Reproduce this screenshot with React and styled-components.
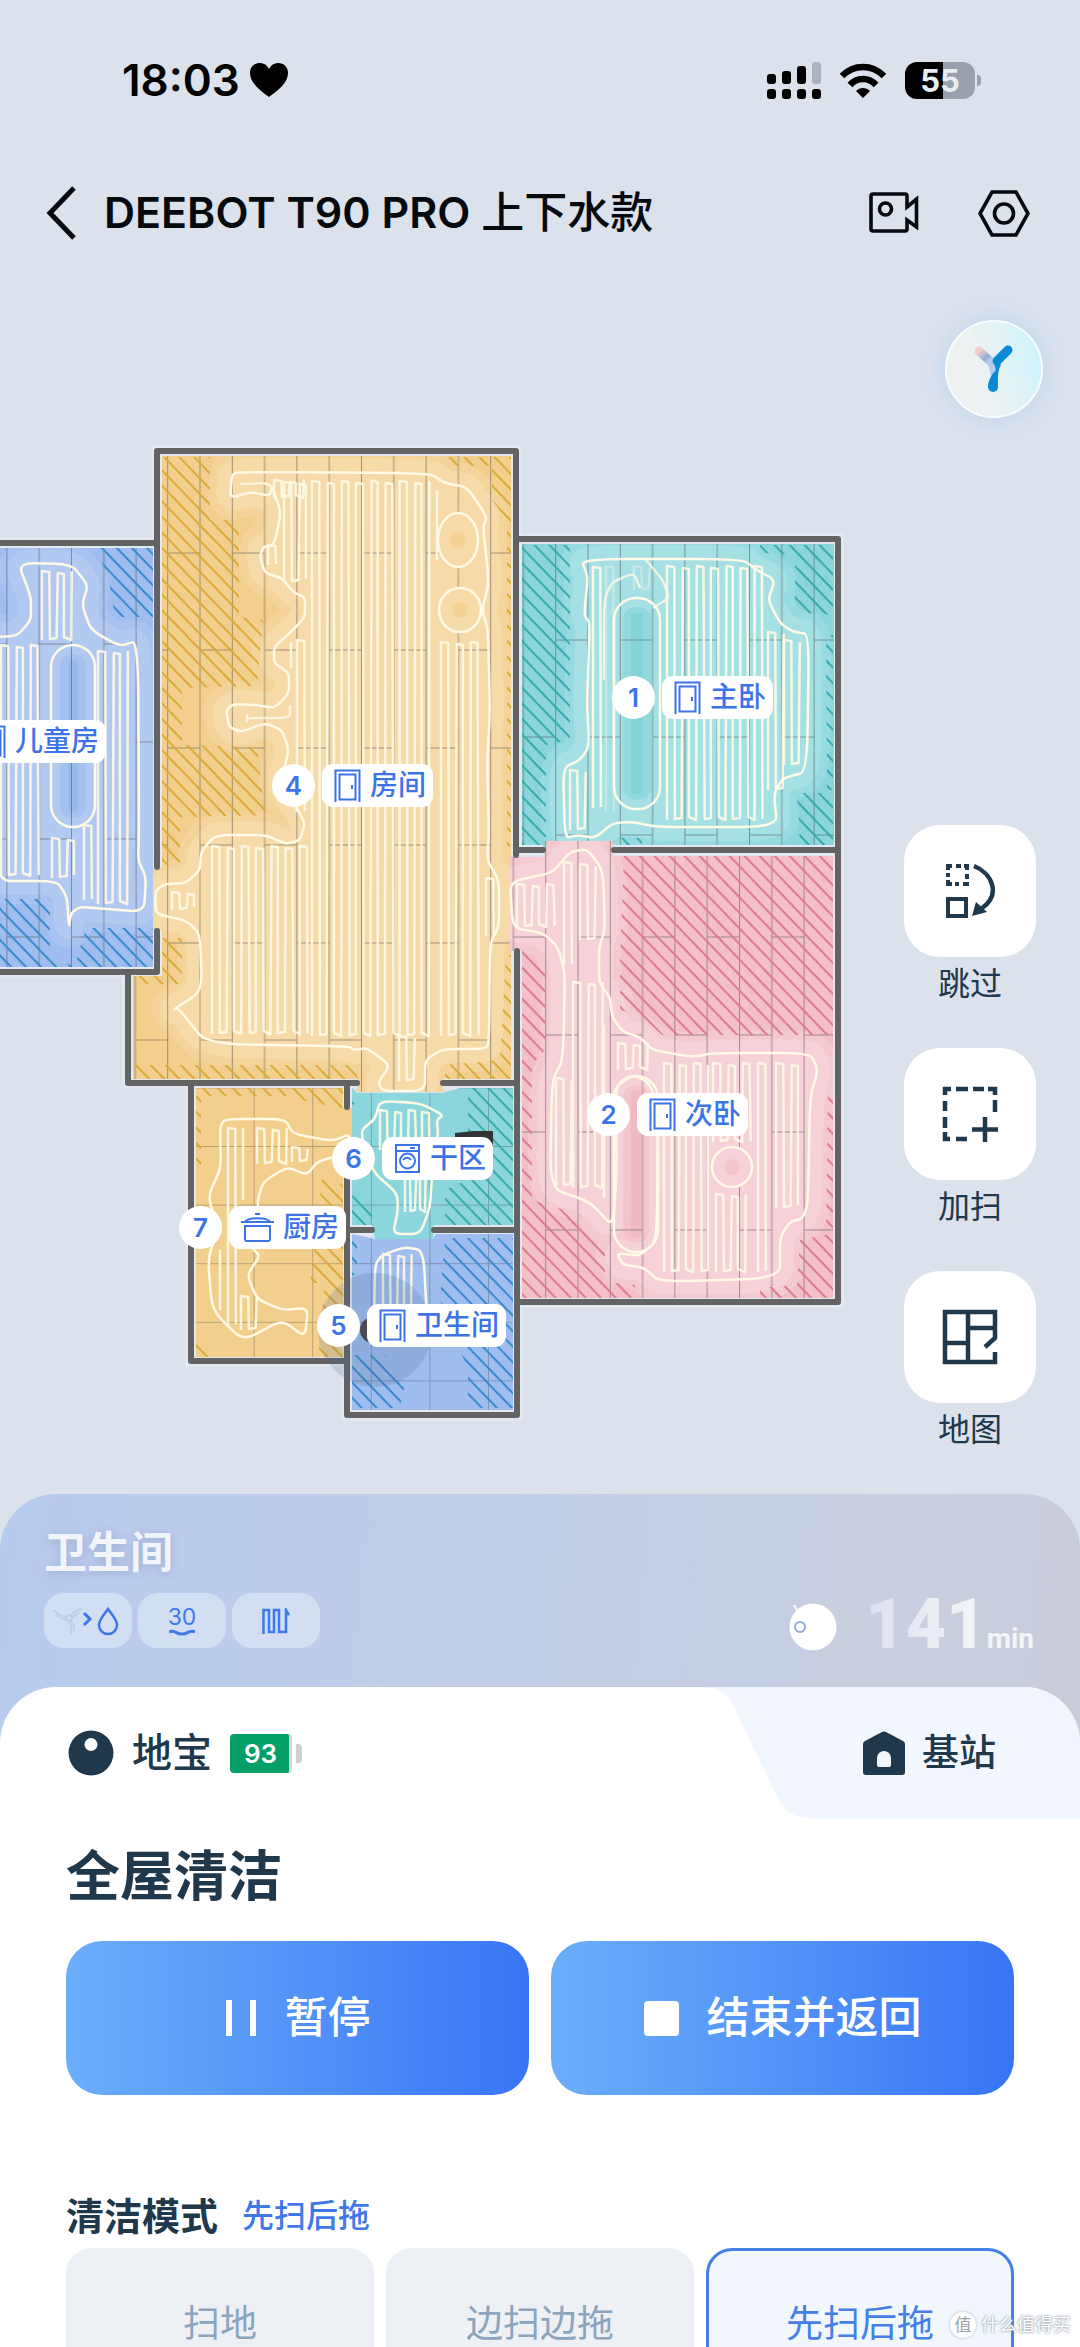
import React, { useState } from "react";
import styled, { createGlobalStyle } from "styled-components";

const GlobalStyle = createGlobalStyle`
    * { box-sizing: border-box; }
    body {
        margin: 0;
        background: #dbe2ec;
        font-family: Inter, "Noto Sans CJK SC", sans-serif;
        line-height: 1.2;
        color: #20384b;
    }
    button { font-family: inherit; line-height: inherit; color: inherit; border: 0; padding: 0; background: none; }
    h1, h2, h3, p { margin: 0; }
    svg { display: block; flex: none; }
`

const Page = styled.div`
    position: relative;
    height: 100vh;
    overflow: hidden;
    background: #dbe2ec;
    display: flex;
    flex-direction: column;
`

const StatusBar = styled.div`
    flex: none;
    height: 160px;
    padding: 0 105px 0 122px;
    display: flex;
    align-items: center;
    justify-content: space-between;
    color: #000;
`
const Clock = styled.div`
    display: flex;
    align-items: center;
    gap: 10px;
    font-size: 44px;
    font-weight: 600;
`
const StatusIcons = styled.div`
    display: flex;
    align-items: center;
    gap: 18px;
`
const PhoneBattery = styled.div`
    position: relative;
    width: 70px;
    height: 37px;
    border-radius: 12px;
    background: linear-gradient(90deg, #000 55%, #98a1ad 55%);
    color: #e9edf3;
    font-size: 31px;
    line-height: 37px;
    font-weight: 700;
    text-align: center;
    &::after {
        content: "";
        position: absolute;
        right: -6px;
        top: 13px;
        width: 4px;
        height: 11px;
        border-radius: 0 4px 4px 0;
        background: #98a1ad;
    }
`

const Header = styled.header`
    flex: none;
    height: 106px;
    padding: 0 50px 0 44px;
    display: flex;
    align-items: center;
    color: #06090d;
`
const Title = styled.h1`
    flex: 1;
    margin-left: 26px;
    font-size: 43px;
    font-weight: 600;
    white-space: nowrap;
`
const Edition = styled.span`
    font-weight: 500;
`
const IconButton = styled.button`
    margin-left: ${(props) => props.$gap || 0}px;
`

const MapArea = styled.main`
    position: relative;
    flex: none;
    height: 1228px;
    overflow: hidden;
`
const Pin = styled.div`
    position: absolute;
    left: ${(props) => props.$x}px;
    top: ${(props) => props.$y}px;
    display: flex;
    gap: 7px;
    color: #3c74e8;
    font-weight: 600;
`
const PinNumber = styled.span`
    width: 43px;
    height: 43px;
    border-radius: 50%;
    background: #fff;
    font-size: 26px;
    line-height: 43px;
    text-align: center;
`
const PinLabel = styled.span`
    display: flex;
    align-items: center;
    gap: 9px;
    height: 43px;
    padding: 0 7px 0 12px;
    border-radius: 11px;
    background: #fff;
    font-size: 28px;
    line-height: 43px;
    font-weight: 500;
    white-space: nowrap;
`
const Assistant = styled.button`
    position: absolute;
    right: 37px;
    top: 54px;
    width: 98px;
    height: 98px;
    border: 2px solid #f6fcff;
    border-radius: 50%;
    background: linear-gradient(75deg, #eef1f2 35%, #e2f3f6 60%, #caf2fc);
    box-shadow: 0 0 24px #b9d3ee;
    display: flex;
    align-items: center;
    justify-content: center;
`
const Tools = styled.nav`
    position: absolute;
    right: 44px;
    top: 559px;
    display: flex;
    flex-direction: column;
    gap: 37px;
`
const Tool = styled.button`
    width: 132px;
    font-size: 32px;
    line-height: 54px;
`
const ToolIcon = styled.span`
    display: flex;
    align-items: center;
    justify-content: center;
    height: 132px;
    border-radius: 36px;
    background: #fff;
`

const Panel = styled.section`
    flex: none;
    border-radius: 56px 56px 0 0;
    background: linear-gradient(95deg, #b8cbee, #c1cde7 45%, #c9cfdf 80%, #c9ccd8);
`
const Progress = styled.div`
    height: 193px;
    padding: 28px 46px 0 44px;
    display: flex;
    justify-content: space-between;
`
const RoomName = styled.h2`
    margin-bottom: 11px;
    font-size: 43px;
    line-height: 60px;
    font-weight: 700;
    color: #f1f4f8;
    text-shadow: 0 2px 8px rgba(100, 120, 160, 0.35);
`
const Chips = styled.div`
    display: flex;
    gap: 6px;
`
const Chip = styled.span`
    width: 88px;
    height: 55px;
    border-radius: 20px;
    background: rgba(222, 232, 246, 0.65);
    color: #3f78ee;
    font-size: 23px;
    line-height: 24px;
    display: flex;
    flex-direction: column;
    align-items: center;
    justify-content: center;
`
const Remaining = styled.div`
    display: flex;
    align-items: flex-end;
    height: 137px;
    color: #f3f5f9;
    font-family: Roboto, sans-serif;
    font-weight: 700;
`
const Minutes = styled.strong`
    margin-left: 28px;
    font-size: 70px;
    line-height: 70px;
    color: transparent;
    background: linear-gradient(90deg, #dce1ec, #f4f5f9);
    background-clip: text;
`
const Unit = styled.span`
    font-size: 28px;
    line-height: 41px;
`

const Sheet = styled.div`
    border-radius: 56px 56px 0 0;
    overflow: hidden;
    background: #fff;
`
const Tabs = styled.div`
    height: 132px;
    display: flex;
`
const RobotTab = styled.button`
    flex: 1;
    padding-left: 68px;
    display: flex;
    align-items: center;
    font-size: 40px;
    font-weight: 500;
`
const TabName = styled.span`
    margin: 0 18px;
`
const StationTab = styled.button`
    padding: 0 84px 0 43px;
    display: flex;
    align-items: center;
    gap: 17px;
    background: #f2f7fe;
    font-size: 37px;
    font-weight: 500;
`
const RobotBattery = styled.span`
    position: relative;
    width: 62px;
    height: 39px;
    padding-left: 2px;
    border-radius: 4px;
    border-right: 3px solid #d6d6d6;
    background: #04a067;
    color: #fff;
    font-size: 26px;
    line-height: 39px;
    font-weight: 600;
    text-align: center;
    &::after {
        content: "";
        position: absolute;
        right: -13px;
        top: 10px;
        width: 6px;
        height: 19px;
        border-radius: 0 4px 4px 0;
        background: #cfcfcf;
    }
`
const Controls = styled.div`
    padding: 26px 66px 0;
`
const TaskName = styled.h2`
    font-size: 54px;
    line-height: 64px;
    font-weight: 700;
`
const Actions = styled.div`
    margin-top: 32px;
    display: grid;
    grid-template-columns: 1fr 1fr;
    gap: 22px;
`
const Action = styled.button`
    height: 154px;
    border-radius: 36px;
    background: linear-gradient(90deg, #6aaefb, #5090f7 55%, #3775f5);
    color: #fff;
    font-size: 43px;
    font-weight: 500;
    display: flex;
    align-items: center;
    justify-content: center;
    gap: 28px;
`
const ModeHeading = styled.div`
    margin-top: 90px;
    height: 63px;
    display: flex;
    align-items: center;
    gap: 24px;
`
const ModeTitle = styled.h3`
    font-size: 38px;
    font-weight: 700;
`
const ModeCurrent = styled.span`
    color: #3f78e8;
    font-size: 32px;
    font-weight: 500;
`
const Modes = styled.div`
    display: grid;
    grid-template-columns: repeat(3, 1fr);
    gap: 12px;
`
const Mode = styled.button`
    height: 152px;
    border-radius: 26px;
    border: 3px solid ${(props) => (props.$active ? "#4480e8" : "#edf1f5")};
    background: ${(props) => (props.$active ? "#f2f7fe" : "#edf1f5")};
    color: ${(props) => (props.$active ? "#4480e8" : "#8aa5bd")};
    font-size: 37px;
`
const Watermark = styled.div`
    position: absolute;
    right: 9px;
    bottom: 8px;
    display: flex;
    align-items: center;
    gap: 5px;
    color: #fff;
    font-size: 18px;
    line-height: 28px;
    text-shadow: 0 0 2px #8d97a3, 0 0 3px #a9b2bd;
`
const WatermarkBadge = styled.span`
    width: 26px;
    height: 26px;
    border-radius: 50%;
    background: #fff;
    color: #9aa3ad;
    font-size: 17px;
    line-height: 26px;
    text-align: center;
    text-shadow: none;
    box-shadow: 0 0 3px #a9b2bd;
`

// closed, slightly rounded line through a flat list of coordinates
function loop(text, closed = true) {
    const p = text.split(" ").map((pair) => pair.split(",").map(Number))
    const mid = (a, b) => [(a[0] * 0.3 + b[0] * 0.7), (a[1] * 0.3 + b[1] * 0.7)]
    let d = ""
    p.forEach((point, i) => {
        if (!closed && (i === 0 || i === p.length - 1)) {
            d += `${i ? "L" : "M"}${point}`
            return
        }
        const before = mid(p[(i + p.length - 1) % p.length], point)
        const after = mid(p[(i + 1) % p.length], point)
        d += `${d ? "L" : "M"}${before}Q${point} ${after}`
    })
    return closed ? d + "Z" : d
}

// up and down sweeping track between two x positions
function snake([from, to, top, bottom, step = 7.3]) {
    let d = ""
    let down = false
    for (let x = from, i = 0; x <= to; x += step, i++) {
        const wobble = (i * 5) % 4
        const start = down ? top + wobble : bottom - wobble
        const end = down ? bottom - wobble : top + wobble
        d += `${i ? "L" : "M"}${x} ${start}L${x + (i % 3) * 0.6} ${end}`
        down = !down
    }
    return d
}

const colors = {
    yellow: { base: "#f3cf8e", light: "#f6daa7", hatch: "#d9a932" },
    blue: { base: "#9fbdee", light: "#b2caf1", hatch: "#358aca" },
    teal: { base: "#8ad6dc", light: "#a4e0e4", hatch: "#35aaa8" },
    pink: { base: "#f3c0c8", light: "#f6d1d7", hatch: "#d97a8b" },
}

const rooms = [
    {
        id: "kids",
        color: "blue",
        grid: "brickBlue",
        floor: "-10,548 153,548 153,967 -10,967",
        hatch: [
            "95,548 153,548 153,617 115,617 108,575",
            "-10,899 50,899 50,960 75,966 86,928 153,928 153,967 -10,967",
        ],
        track: "-10,637 17,636 31,620 31,597 18,563 71,564 88,585 82,605 91,630 119,646 138,641 139,830 138,860 146,877 144,912 96,908 80,907 71,913 69,928 67,897 57,881 -10,881",
        ovals: [[51, 645, 44, 182]],
        sweeps: [[42, 74, 571, 640], [1, 44, 645, 876], [98, 134, 651, 904], [52, 78, 838, 878], [84, 94, 825, 900]],
    },
    {
        id: "main",
        color: "yellow",
        grid: "brickYellow",
        floor: "162,456 511,456 511,1079 443,1079 443,1092 357,1092 357,1079 133,1079 133,976 162,976 162,930 153,930 153,868 162,868",
        hatch: [
            "162,457 210,457 210,520 239,520 239,617 263,620 257,686 182,688 182,745 257,747 265,815 180,817 180,863 162,866",
            "445,457 511,457 511,846 507,846 507,520 492,500 492,466 445,466",
            "162,938 182,938 182,984 134,984 134,976 162,976",
            "134,1065 354,1065 358,1079 134,1079",
            "506,955 513,955 513,1079 445,1079 445,1065 500,1060",
        ],
        track: "230,498 232,475 238,472 430,473 444,483 467,487 487,517 483,527 489,583 482,610 488,630 490,713 487,763 489,830 487,860 499,880 499,927 490,943 489,1045 483,1049 443,1049 425,1060 425,1091 383,1091 378,1083 390,1065 367,1048 355,1050 347,1046 207,1044 178,1008 173,1010 202,991 200,934 187,921 157,914 155,903 156,890 165,884 186,883 200,870 201,852 215,835 265,835 286,844 300,840 305,823 296,807 280,785 289,750 282,730 265,723 241,732 229,727 226,710 234,704 255,705 275,708 289,693 289,673 274,663 274,647 293,630 305,617 305,597 294,593 282,578 265,573 260,557 263,547 274,545 281,513 272,485 270,496 251,492",
        circles: [[458, 540, 20, 27], [460, 610, 21, 22]],
        ovals: [],
        sweeps: [
            [212, 310, 846, 1034], [274, 305, 480, 498], [284, 310, 482, 582], [268, 282, 545, 565],
            [312, 432, 481, 1036], [437, 444, 490, 560], [441, 482, 642, 1036], [297, 310, 640, 812],
            [399, 418, 1036, 1081], [172, 194, 892, 910], [486, 494, 878, 936], [291, 297, 642, 668],
        ],
        extra: ["247,714 247,722 247,718 290,718 290,705", "240,484 270,483 276,500"],
    },
    {
        id: "master",
        color: "teal",
        grid: "brickTeal",
        floor: "522,544 834,544 834,845 613,845 613,851 543,851 543,845 522,845",
        hatch: [
            "522,545 570,545 570,740 546,745 546,845 522,845",
            "760,545 833,545 833,615 795,612 795,555 760,553",
            "826,635 833,635 833,790 827,790",
            "797,793 833,793 833,845 800,845",
            "620,838 642,838 642,845 620,845",
        ],
        track: "581,559 742,559 757,570 775,580 768,600 780,623 793,632 809,634 807,772 783,778 774,793 777,827 657,827 633,822 613,823 595,838 578,835 565,838 563,768 580,760 589,747 587,700 590,623 584,615 588,577",
        ovals: [[614, 598, 46, 211]],
        sweeps: [[593, 602, 567, 808], [667, 765, 566, 820], [768, 783, 632, 790], [784, 799, 640, 765], [570, 590, 770, 830]],
        extra: ["645,559 663,580 669,598 653,608", "604,680 604,600 612,582 634,573 640,588"],
        faint: [[606, 616, 566, 812], [634, 654, 566, 590]],
    },
    {
        id: "second",
        color: "pink",
        grid: "brickPink",
        floor: "509,857 545,857 545,841 613,841 613,856 833,856 833,1298 522,1298 522,951 509,951",
        hatch: [
            "624,856 833,856 833,1035 662,1035 640,1015 620,1010 620,960",
            "522,950 545,965 545,1050 532,1065 532,1200 580,1215 605,1250 605,1282 635,1285 635,1298 522,1298",
            "828,1090 833,1090 833,1298 760,1298 760,1288 797,1285 800,1240 826,1235",
        ],
        track: "510,887 517,880 552,873 570,852 587,849 603,870 605,930 599,947 599,983 610,997 612,1017 623,1032 640,1037 652,1050 693,1057 713,1053 810,1053 818,1070 810,1097 808,1203 803,1218 790,1222 780,1237 780,1278 660,1282 643,1267 623,1265 617,1253 640,1256 657,1240 658,1103 648,1082 633,1075 615,1087 617,1167 613,1227 590,1202 550,1188 552,1080 563,1060 565,973 558,947 543,933 513,928",
        circles: [[732, 1167, 20, 20]],
        ovals: [[614, 1076, 44, 176]],
        sweeps: [
            [517, 560, 884, 927], [564, 576, 862, 965], [580, 597, 864, 940], [573, 604, 982, 1188],
            [556, 572, 1078, 1186], [604, 610, 1025, 1198], [618, 650, 1043, 1070], [664, 708, 1063, 1272],
            [713, 755, 1063, 1142], [716, 752, 1194, 1272], [758, 772, 1063, 1272], [776, 800, 1063, 1208],
        ],
    },
    {
        id: "kitchen",
        color: "yellow",
        grid: "square",
        floor: "196,1088 343,1088 343,1108 357,1108 357,1145 343,1145 343,1357 196,1357",
        hatch: [
            "196,1088 343,1088 343,1108 300,1100 300,1096 201,1096 201,1165 196,1165",
            "322,1178 343,1185 343,1357 318,1357 325,1280 310,1285",
            "196,1330 212,1357 196,1357",
        ],
        plain: true,
        track: "220,1127 225,1119 285,1119 293,1134 333,1141 350,1134 352,1158 333,1157 317,1162 307,1175 287,1167 263,1182 257,1203 262,1222 252,1248 260,1256 247,1275 257,1299 282,1310 308,1308 305,1337 282,1320 243,1341 212,1310 208,1258 218,1230 208,1196 221,1168",
        ovals: [],
        sweeps: [[228, 236, 1128, 1325], [243, 250, 1128, 1200], [257, 288, 1128, 1164], [292, 309, 1147, 1162], [241, 258, 1296, 1330], [220, 223, 1250, 1310]],
    },
    {
        id: "dry",
        color: "teal",
        grid: "square",
        floor: "352,1088 357,1093 443,1093 460,1088 513,1088 513,1225 433,1225 433,1239 375,1239 372,1225 352,1225",
        hatch: [
            "468,1088 513,1088 513,1225 445,1225 445,1190 468,1180",
            "352,1195 372,1205 372,1225 352,1225",
            "352,1088 358,1100 352,1106",
        ],
        plain: true,
        track: "360,1131 375,1119 380,1101 420,1103 443,1115 437,1120 438,1136 432,1175 430,1208 420,1234 393,1234 398,1210 397,1193 373,1172",
        ovals: [],
        sweeps: [[380, 432, 1110, 1150, 7], [405, 428, 1175, 1212, 5]],
    },
    {
        id: "bath",
        color: "blue",
        grid: "square",
        floor: "352,1234 375,1239 433,1239 436,1234 513,1234 513,1410 352,1410",
        hatch: [
            "445,1238 513,1238 513,1408 468,1408 468,1370 440,1300",
            "352,1355 385,1355 405,1385 400,1408 352,1408",
            "352,1236 357,1240 357,1275 352,1275",
        ],
        plain: true,
        track: "374,1320 375,1265 382,1255 405,1247 420,1250 424,1262 427,1320",
        ovals: [],
        sweeps: [[383, 416, 1254, 1320, 7]],
    },
]

const walls = [
    "M-10 543H157", "M157 867V451H516V855", "M157 931V972H-10", "M128 972V1083H357", "M443 1083H516",
    "M517 951V1415H347V1150", "M347 1083V1107", "M191 1083V1361H347",
    "M347 1230H372", "M434 1230H517", "M517 539H838V1302H517", "M517 850H543", "M614 850H838",
]

function Grid({ id, x, y }) {
    return (
        <pattern id={id} x={x} y={y} width="64.6" height="195" patternUnits="userSpaceOnUse">
            <path d="M.5 0V195M32.8 0V195M0 49H32.5M32.5 146H64.6" stroke="#3b3b3b" strokeOpacity=".45" fill="none" />
        </pattern>
    )
}

function Room({ room }) {
    const tone = colors[room.color]
    const track = loop(room.track)
    return (
        <g>
            <clipPath id={`clip-${room.id}`}><polygon points={room.floor} /></clipPath>
            <polygon points={room.floor} fill={tone.base} />
            <g clipPath={`url(#clip-${room.id})`}>
                {!room.plain && <path d={track} fill={tone.light} stroke={tone.light} strokeWidth="46" strokeOpacity=".5" strokeLinejoin="round" />}
                {!room.plain && <path d={track} fill={tone.light} stroke={tone.light} strokeWidth="28" strokeLinejoin="round" />}
                {room.ovals.map(([x, y, w, h]) => (
                    <g key={x}>
                        <rect x={x + 9} y={y + 9} width={w - 18} height={h - 18} rx="13" fill={tone.base} opacity=".7" />
                        <rect x={x + 17} y={y + 15} width={w - 34} height={h - 30} rx="4" fill={tone.hatch} opacity=".12" />
                    </g>
                ))}
                <rect x="-10" y="440" width="860" height="980" fill={`url(#${room.grid})`} />
                {room.hatch.map((area) => <polygon key={area} points={area} fill={`url(#hatch-${room.color})`} />)}
                <g fill="none" stroke="#fffae6" strokeWidth="2.500" strokeLinejoin="round">
                    <path d={track} />
                    {room.sweeps.map((range) => <path key={range.join()} d={snake(range)} opacity=".9" />)}
                    {(room.extra || []).map((line) => <path key={line} d={loop(line, false)} opacity=".8" />)}
                    {(room.faint || []).map((range) => <path key={range.join()} d={snake(range)} opacity=".35" />)}
                </g>
                {(room.circles || []).map(([x, y, rx, ry]) => (
                    <g key={y}>
                        <ellipse cx={x} cy={y} rx={rx} ry={ry} fill={tone.light} stroke="#fffae6" strokeWidth="2.500" />
                        <circle cx={x} cy={y} r="8" fill={tone.base} opacity=".7" />
                    </g>
                ))}
                {room.ovals.map(([x, y, w, h]) => (
                    <rect key={x} x={x} y={y} width={w} height={h} rx="22" fill="none" stroke="#fffae6" strokeWidth="2.500" />
                ))}
            </g>
        </g>
    )
}

function FloorPlan() {
    return (
        <svg width="1080" height="1228" viewBox="0 266 1080 1228" aria-hidden="true">
            <defs>
                <Grid id="brickYellow" x="167.2" y="504" />
                <Grid id="brickTeal" x="555.2" y="591" />
                <Grid id="brickPink" x="545.2" y="986" />
                <Grid id="brickBlue" x="6.4" y="498" />
                <pattern id="square" x="196" y="1146" width="58.6" height="58.6" patternUnits="userSpaceOnUse">
                    <path d="M0 .5H58.6M58.1 0V58.6" stroke="#3b3b3b" strokeOpacity=".32" fill="none" />
                </pattern>
                {Object.keys(colors).map((name) => (
                    <pattern key={name} id={`hatch-${name}`} width="10.8" height="10.8" patternUnits="userSpaceOnUse" patternTransform="rotate(46)">
                        <path d="M0 5H10.8" stroke={colors[name].hatch} strokeWidth="2" />
                    </pattern>
                ))}
            </defs>
            <path d={walls.join("")} fill="none" stroke="#e4e9f1" strokeWidth="11" />
            {rooms.map((room) => <Room key={room.id} room={room} />)}
            <path d="M455 1133L474 1131H493V1167H486L455 1150Z" fill="#333" />
            <path d={walls.join("")} fill="none" stroke="#636363" strokeWidth="6" strokeLinecap="round" strokeLinejoin="round" />
            <circle cx="375" cy="1330" r="57" fill="#4a6288" opacity=".18" />
            <circle cx="373" cy="1330" r="13" fill="#4b4b50" />
        </svg>
    )
}

function DoorIcon() {
    return (
        <svg width="27" height="33" viewBox="0 0 27 33" fill="none" stroke="currentColor" strokeWidth="2">
            <path d="M1.500 33V1.500H25.500V33M5.500 5.500H21.500V30.500H5.500ZM18 16V20" />
        </svg>
    )
}

function WasherIcon() {
    return (
        <svg width="27" height="31" viewBox="0 0 27 31" fill="none" stroke="currentColor" strokeWidth="2">
            <path d="M2 2H25V29H2ZM2 8H25M16 5H21M9 17C11 14 15 14 17 17" />
            <circle cx="13.500" cy="18" r="7.500" />
        </svg>
    )
}

function PotIcon() {
    return (
        <svg width="33" height="31" viewBox="0 0 33 31" fill="none" stroke="currentColor" strokeWidth="2">
            <path d="M0 10H33M4 10C7 5 26 5 29 10M14 2H19M4 14H29V27Q29 29 27 29H6Q4 29 4 27Z" />
        </svg>
    )
}

const pins = [
    { x: -83, y: 454, number: 3, name: "儿童房", icon: <DoorIcon /> },
    { x: 612, y: 410, number: 1, name: "主卧", icon: <DoorIcon /> },
    { x: 272, y: 498, number: 4, name: "房间", icon: <DoorIcon /> },
    { x: 587, y: 827, number: 2, name: "次卧", icon: <DoorIcon /> },
    { x: 332, y: 871, number: 6, name: "干区", icon: <WasherIcon /> },
    { x: 179, y: 940, number: 7, name: "厨房", icon: <PotIcon /> },
    { x: 317, y: 1038, number: 5, name: "卫生间", icon: <DoorIcon /> },
]

function SkipIcon() {
    return (
        <svg width="52" height="56" viewBox="0 0 52 56" fill="none" stroke="#20384b" strokeWidth="4">
            <path d="M4 7V3H8M12 3H17M20 3H23V7M23 11V16M23 19V21H19M15 21H11M8 21H4V17M4 14V10" />
            <rect x="4" y="36" width="18" height="17" />
            <path d="M30 3C48 10 58 32 37 46" strokeWidth="4.500" />
            <path d="M28 53L32 39L43 49Z" fill="#20384b" stroke="none" />
        </svg>
    )
}

function AddAreaIcon() {
    return (
        <svg width="56" height="56" viewBox="0 0 56 56" fill="none" stroke="#20384b" strokeWidth="4.500">
            <path d="M3 9V3H9M14 3H26M31 3H42M46 3H53V9M53 14V26M3 15V25M3 31V42M3 46V53H8M14 53H25M43 31V56M30 43.500H56" />
        </svg>
    )
}

function RoomsIcon() {
    return (
        <svg width="56" height="56" viewBox="0 0 56 56" fill="none" stroke="#20384b" strokeWidth="4.500">
            <path d="M43 38L53 29V3H3V53H53V43M26 3V53M3 34H26M26 19H53" />
        </svg>
    )
}

const tools = [
    { name: "跳过", icon: <SkipIcon /> },
    { name: "加扫", icon: <AddAreaIcon /> },
    { name: "地图", icon: <RoomsIcon /> },
]
const modes = ["扫地", "边扫边拖", "先扫后拖"]

function PhoneStatus() {
    return (
        <StatusBar>
            <Clock>
                18:03
                <svg width="38" height="34" viewBox="0 0 38 34"><path d="M19 34C8 26 0 19 0 10C0 4 4 0 10 0C14 0 17 2 19 6C21 2 24 0 28 0C34 0 38 4 38 10C38 19 30 26 19 34Z" /></svg>
            </Clock>
            <StatusIcons>
                <svg width="54" height="37" viewBox="0 0 54 37">
                    <rect x="0" y="12" width="9" height="10" rx="3" /><rect x="15" y="9" width="9" height="13" rx="3" />
                    <rect x="30" y="4" width="9" height="18" rx="3" /><rect x="45" y="0" width="9" height="22" rx="3" fill="#acb3be" />
                    <rect x="0" y="27" width="9" height="10" rx="3" /><rect x="15" y="27" width="9" height="10" rx="3" />
                    <rect x="30" y="27" width="9" height="10" rx="3" /><rect x="45" y="27" width="9" height="10" rx="3" />
                </svg>
                <svg width="48" height="35" viewBox="0 0 48 35" fill="none" stroke="#000" strokeWidth="6.500">
                    <path d="M3 13C15 1 33 1 45 13M11 22C18 14 30 14 37 22" />
                    <path d="M24 35L17 28C21 24 27 24 31 28Z" fill="#000" stroke="none" />
                </svg>
                <PhoneBattery>55</PhoneBattery>
            </StatusIcons>
        </StatusBar>
    )
}

export default function App() {
    const [mode, setMode] = useState("先扫后拖")
    return (
        <Page>
            <GlobalStyle />
            <PhoneStatus />
            <Header>
                <IconButton aria-label="返回">
                    <svg width="34" height="54" viewBox="0 0 34 54" fill="none" stroke="#06090d" strokeWidth="5"><path d="M30 2L6 27L30 52" /></svg>
                </IconButton>
                <Title>DEEBOT T90 PRO <Edition>上下水款</Edition></Title>
                <IconButton aria-label="视频">
                    <svg width="50" height="42" viewBox="0 0 50 42" fill="none" stroke="#06090d" strokeWidth="3.600">
                        <path d="M38 15L47.500 7V35L38 28V37Q38 39 36 39H4Q2 39 2 37V4Q2 2 4 2H36Q38 2 38 4Z" />
                        <circle cx="16.500" cy="17" r="6" />
                    </svg>
                </IconButton>
                <IconButton $gap={59} aria-label="设置">
                    <svg width="52" height="47" viewBox="0 0 52 47" fill="none" stroke="#06090d" strokeWidth="3.600">
                        <path d="M14 2H38L50 23.500L38 45H14L2 23.500Z" />
                        <circle cx="26" cy="23.500" r="9.500" />
                    </svg>
                </IconButton>
            </Header>

            <MapArea>
                <FloorPlan />
                {pins.map((pin) => (
                    <Pin key={pin.number} $x={pin.x} $y={pin.y}>
                        <PinNumber>{pin.number}</PinNumber>
                        <PinLabel>{pin.icon}{pin.name}</PinLabel>
                    </Pin>
                ))}
                <Assistant aria-label="语音助手">
                    <svg width="40" height="50" viewBox="0 0 40 50" fill="none" strokeLinecap="round">
                        <defs>
                            <linearGradient id="arm" x1="0" y1="0" x2="1" y2="1">
                                <stop offset="0" stopColor="#f7cdcb" /><stop offset=".6" stopColor="#8fb0d8" /><stop offset="1" stopColor="#c5daf5" />
                            </linearGradient>
                        </defs>
                        <path d="M5 7L17 18" stroke="url(#arm)" strokeWidth="9" />
                        <path d="M15 15Q23 20 23 28Q20 32 17 38Q17 26 13 19Z" fill="#b3cdf0" />
                        <path d="M34 6L23 17" stroke="#0a8bd6" strokeWidth="9" />
                        <path d="M19 15L27 21Q23 26 24 43A5 5 0 0 1 14 43Q14 34 22 26Z" fill="#0a8bd6" />
                    </svg>
                </Assistant>
                <Tools>
                    {tools.map((tool) => (
                        <Tool key={tool.name}>
                            <ToolIcon>{tool.icon}</ToolIcon>
                            {tool.name}
                        </Tool>
                    ))}
                </Tools>
            </MapArea>

            <Panel>
                <Progress>
                    <div>
                        <RoomName>卫生间</RoomName>
                        <Chips>
                            <Chip>
                                <svg width="70" height="30" viewBox="0 0 70 30" fill="none" stroke="currentColor" strokeWidth="2.500">
                                    <g stroke="#bccbe6" strokeWidth="1.500">
                                        <circle cx="16" cy="12" r="3" />
                                        <path d="M13 11Q6 10 1 4M13 14Q5 12 3 8M18 10Q22 4 29 3M19 12Q24 9 26 6M15 15Q20 20 18 28M18 15Q22 20 21 25" />
                                    </g>
                                    <path d="M31 7L37 13L31 19" strokeWidth="3" />
                                    <path d="M55 3C50 10 46 14 46 19A9 9 0 0 0 64 19C64 14 60 10 55 3Z" />
                                </svg>
                            </Chip>
                            <Chip>
                                30
                                <svg width="26" height="7" viewBox="0 0 26 7" fill="none" stroke="currentColor" strokeWidth="3"><path d="M0 3C6 0 8 6 13 5C18 6 20 0 26 3" /></svg>
                            </Chip>
                            <Chip>
                                <svg width="28" height="26" viewBox="0 0 28 26" fill="none" stroke="currentColor" strokeWidth="2.500">
                                    <path d="M1.500 26V2H7V24H12V2H17V24H24V2L27 7" />
                                </svg>
                            </Chip>
                        </Chips>
                    </div>
                    <Remaining>
                        <svg width="48" height="56" viewBox="0 0 48 56">
                            <circle cx="24" cy="24" r="23.500" fill="#fff" />
                            <path d="M5 2L8 7" stroke="#fff" strokeWidth="2" />
                            <circle cx="11" cy="24" r="5" fill="none" stroke="#8ca8d6" strokeWidth="2" />
                        </svg>
                        <Minutes>141</Minutes>
                        <Unit>min</Unit>
                    </Remaining>
                </Progress>

                <Sheet>
                    <Tabs>
                        <RobotTab>
                            <svg width="46" height="46" viewBox="0 0 46 46"><circle cx="23" cy="23" r="22.500" fill="#20384b" /><circle cx="23" cy="14.500" r="6.500" fill="#fff" /></svg>
                            <TabName>地宝</TabName>
                            <RobotBattery>93</RobotBattery>
                        </RobotTab>
                        <svg width="124" height="132" viewBox="0 0 124 132"><path d="M0 0C22 0 32 6 38 20L82 112C90 126 100 132 124 132V0Z" fill="#f2f7fe" /></svg>
                        <StationTab>
                            <svg width="42" height="44" viewBox="0 0 42 44">
                                <path d="M19 1Q21 0 23 1L40 10Q42 11 42 13V41Q42 44 39 44H3Q0 44 0 41V13Q0 11 2 10Z" fill="#20384b" />
                                <path d="M14 34V27A7 7 0 0 1 28 27V34Q28 36 26 36H16Q14 36 14 34Z" fill="#f2f7fe" />
                            </svg>
                            基站
                        </StationTab>
                    </Tabs>
                    <Controls>
                        <TaskName>全屋清洁</TaskName>
                        <Actions>
                            <Action>
                                <svg width="32" height="38" viewBox="0 0 32 38" stroke="#fff" strokeWidth="6"><path d="M4 1V37M28 1V37" /></svg>
                                暂停
                            </Action>
                            <Action>
                                <svg width="35" height="35" viewBox="0 0 35 35"><rect width="35" height="35" rx="4" fill="#fff" /></svg>
                                结束并返回
                            </Action>
                        </Actions>
                        <ModeHeading>
                            <ModeTitle>清洁模式</ModeTitle>
                            <ModeCurrent>{mode}</ModeCurrent>
                        </ModeHeading>
                        <Modes>
                            {modes.map((name) => (
                                <Mode key={name} $active={name === mode} onClick={() => { setMode(name) }}>{name}</Mode>
                            ))}
                        </Modes>
                    </Controls>
                </Sheet>
            </Panel>
            <Watermark><WatermarkBadge>值</WatermarkBadge>什么值得买</Watermark>
        </Page>
    )
}
